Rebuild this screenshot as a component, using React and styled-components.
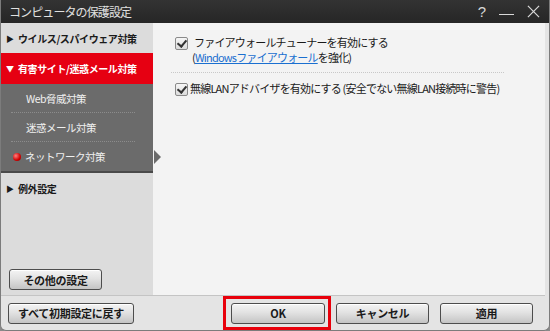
import React from 'react';
import styled, { createGlobalStyle } from 'styled-components';

const GlobalStyle = createGlobalStyle`
  html, body {
    margin: 0;
    padding: 0;
    background: #8a8a8a;
  }
  * {
    box-sizing: border-box;
  }
`;

const App = () => {
  return (
    <>
      <GlobalStyle />
      <Window>
        <TitleBar>
          <Title>コンピュータの保護設定</Title>
          <TitleControls>
            <Help>?</Help>
            <Minimize />
            <CloseIcon viewBox="0 0 14 14">
              <path d="M1 1 L13 13 M13 1 L1 13" stroke="#d8d8d8" strokeWidth="1.3" />
            </CloseIcon>
          </TitleControls>
        </TitleBar>

        <Main>
          <Sidebar>
            <NavItem>
              <Arrow>▶</Arrow>ウイルス/スパイウェア対策
            </NavItem>
            <NavItem active>
              <Arrow>▼</Arrow>有害サイト/迷惑メール対策
            </NavItem>
            <SubMenu>
              <SubItem>Web脅威対策</SubItem>
              <SubItem>迷惑メール対策</SubItem>
              <SubItem current>
                <Bullet />
                ネットワーク対策
              </SubItem>
            </SubMenu>
            <NavItem>
              <Arrow>▶</Arrow>例外設定
            </NavItem>
            <SidebarFooter>
              <Button width="93px">その他の設定</Button>
            </SidebarFooter>
          </Sidebar>

          <Content>
            <Option>
              <CheckBox />
              <OptionText>
                <div>ファイアウォールチューナーを有効にする</div>
                <SubLine>
                  (<Link>Windowsファイアウォール</Link>を強化)
                </SubLine>
              </OptionText>
            </Option>
            <Divider />
            <Option tight>
              <CheckBox />
              <OptionText>無線LANアドバイザを有効にする (安全でない無線LAN接続時に警告)</OptionText>
            </Option>
          </Content>
        </Main>

        <Footer>
          <Button width="126px">すべて初期設定に戻す</Button>
          <FooterRight>
            <Highlight>
              <Button width="94px">OK</Button>
            </Highlight>
            <Button width="93px">キャンセル</Button>
            <Button width="93px">適用</Button>
          </FooterRight>
        </Footer>
      </Window>
    </>
  );
};

export default App;

const font = `"Noto Sans CJK JP", "Liberation Sans", sans-serif`;

const Window = styled.div`
  width: 550px;
  height: 331px;
  display: flex;
  flex-direction: column;
  background: #e4e4e4;
  border: 1px solid #7c7c7c;
  border-top: none;
  border-radius: 0 0 6px 6px;
  overflow: hidden;
  font-family: ${font};
`;

const TitleBar = styled.div`
  flex: none;
  height: 23px;
  display: flex;
  align-items: center;
  justify-content: space-between;
  padding: 0 9px 0 8px;
  background: linear-gradient(#333333, #262626);
`;

const Title = styled.div`
  color: #e0e0e0;
  font-size: 12px;
  letter-spacing: -0.9px;
`;

const TitleControls = styled.div`
  display: flex;
  align-items: center;
  gap: 13px;
`;

const Help = styled.span`
  color: #d8d8d8;
  font-family: "Liberation Sans", sans-serif;
  font-size: 15px;
`;

const Minimize = styled.span`
  width: 15px;
  height: 1px;
  margin-top: 6px;
  background: #d8d8d8;
`;

const CloseIcon = styled.svg`
  width: 13px;
  height: 13px;
`;

const Main = styled.div`
  flex: 1;
  display: flex;
  border-bottom: 1px solid #c4c4c4;
  margin-right: 4px;
`;

const Sidebar = styled.div`
  width: 152px;
  display: flex;
  flex-direction: column;
  background: #dcdcdc;
`;

const NavItem = styled.div`
  height: ${({ active }) => (active ? '31px' : '30px')};
  display: flex;
  align-items: center;
  padding-left: 5px;
  font-size: 10px;
  font-weight: bold;
  letter-spacing: -0.4px;
  color: ${({ active }) => (active ? '#ffffff' : '#1a1a1a')};
  background: ${({ active }) => (active ? '#e60012' : 'transparent')};
`;

const Arrow = styled.span`
  font-size: 8px;
  width: 12px;
`;

const SubMenu = styled.div`
  background: #6b6b6b;
  padding: 0 18px 0 10px;
  border-bottom: 2px solid #4a4a4a;
`;

const SubItem = styled.div`
  position: relative;
  height: 29px;
  display: flex;
  align-items: center;
  padding-left: ${({ current }) => (current ? '2px' : '15px')};
  font-size: 10.5px;
  letter-spacing: -0.5px;
  color: #f0f0f0;
  border-bottom: ${({ current }) => (current ? 'none' : '1px dotted #8c8c8c')};

  &::after {
    content: '';
    display: ${({ current }) => (current ? 'block' : 'none')};
    position: absolute;
    right: -26px;
    top: 8px;
    border-left: 7px solid #6b6b6b;
    border-top: 7px solid transparent;
    border-bottom: 7px solid transparent;
  }
`;

const Bullet = styled.span`
  width: 8px;
  height: 8px;
  margin-right: 4px;
  border-radius: 50%;
  background: radial-gradient(circle at 35% 35%, #ff8080, #d00000 60%, #800000);
`;

const SidebarFooter = styled.div`
  margin-top: auto;
  padding: 0 0 5px 8px;
`;

const Content = styled.div`
  flex: 1;
  background: #f3f3f3;
  padding: 12px 10px 0 22px;
`;

const Option = styled.div`
  display: flex;
  align-items: flex-start;
  gap: ${({ tight }) => (tight ? '2px' : '6px')};
`;

const CheckBox = styled.span`
  flex: none;
  position: relative;
  width: 13px;
  height: 13px;
  margin-top: 2px;
  border: 1px solid #8a8a8a;
  border-radius: 2px;
  background: linear-gradient(#f6f6f6, #dcdcdc);

  &::after {
    content: '';
    position: absolute;
    left: 3px;
    top: 0px;
    width: 4px;
    height: 7px;
    border-right: 2px solid #333;
    border-bottom: 2px solid #333;
    transform: rotate(40deg);
  }
`;

const OptionText = styled.div`
  font-size: 11px;
  line-height: 15px;
  letter-spacing: -0.8px;
  white-space: nowrap;
  color: #1a1a1a;
`;

const SubLine = styled.div`
  margin-left: -2px;
`;

const Link = styled.span`
  color: #1a6fd0;
  text-decoration: underline;
`;

const Divider = styled.div`
  width: 333px;
  margin: 7px 0 8px -4px;
  border-top: 1px dotted #c8c8c8;
`;

const Footer = styled.div`
  flex: none;
  height: 34px;
  display: flex;
  align-items: center;
  justify-content: space-between;
  padding: 0 16px 0 7px;
`;

const FooterRight = styled.div`
  align-self: stretch;
  display: flex;
  align-items: center;
  gap: 11px;
`;

const Highlight = styled.div`
  align-self: stretch;
  display: flex;
  align-items: center;
  margin-right: -6px;
  padding: 0 3px 0 5px;
  border: 3px solid #e8000b;
`;

const Button = styled.button`
  width: ${({ width }) => width};
  height: 21px;
  padding: 0;
  border: 1px solid #4d4d4d;
  border-radius: 3px;
  background: linear-gradient(#f4f4f4 0%, #e2e2e2 45%, #c4c4c4 100%);
  box-shadow: inset 0 1px 0 #ffffff;
  font-family: ${font};
  font-size: 11px;
  font-weight: bold;
  letter-spacing: -0.3px;
  color: #1a1a1a;
`;
